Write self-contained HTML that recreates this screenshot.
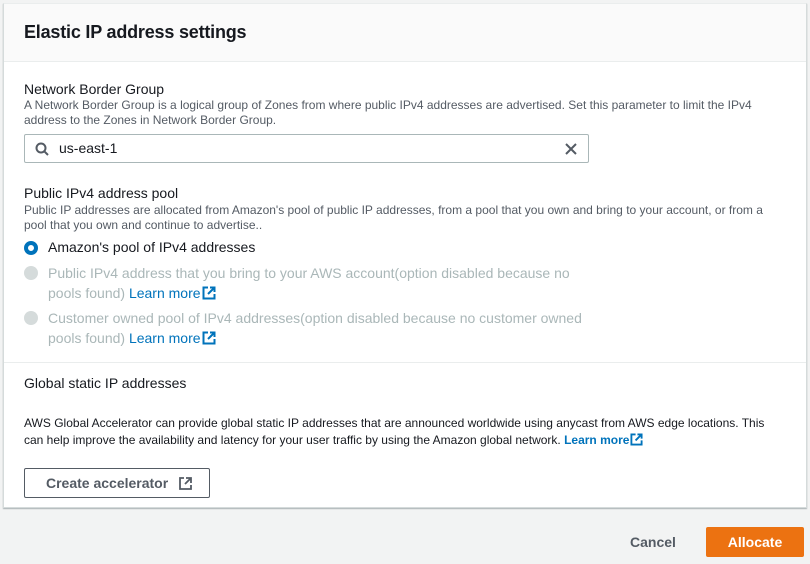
<!DOCTYPE html>
<html><head><style>
*{margin:0;padding:0;box-sizing:border-box}
body{width:810px;height:564px;background:#f2f3f3;font-family:"Liberation Sans",sans-serif;color:#16191f;position:relative;overflow:hidden}
.card{position:absolute;left:3px;top:3px;width:804px;height:505px;background:#fff;border:1px solid #d5dbdb;border-top:1px solid #eaeded;box-shadow:0 1px 1px rgba(0,28,36,.3)}
.hdr{height:58px;background:#fafafa;border-bottom:1px solid #eaeded;padding:18px 20px}
.hdr h2{font-size:18px;font-weight:bold;letter-spacing:-.2px}
.abs{position:absolute}
.lbl{font-size:14px;color:#16191f}
.desc{font-size:12px;color:#545b64;line-height:15px}
.inp{left:20px;top:130px;width:565px;height:29px;border:1px solid #aab7b8;border-radius:2px}
.radio{width:14px;height:14px;border-radius:50%}
.ro{font-size:14px;line-height:20px}
.dis{color:#aab7b8}
a{color:#0073bb;text-decoration:none}
.btn{left:20px;top:464px;width:186px;height:30px;border:1px solid #545b64;border-radius:2px;font-size:14px;font-weight:bold;color:#545b64;padding:6px 0 0 21px}
.ext{display:inline-block;vertical-align:-2px;margin-left:1px}
</style></head><body>
<div class="card">
<div class="hdr"><h2>Elastic IP address settings</h2></div>
<div class="abs lbl" style="left:20px;top:77px">Network Border Group</div>
<div class="abs desc" style="left:20px;top:94px;width:760px">A Network Border Group is a logical group of Zones from where public IPv4 addresses are advertised. Set this parameter to limit the IPv4 address to the Zones in Network Border Group.</div>
<div class="abs inp">
<svg class="abs" style="left:10px;top:7px" width="14" height="14" viewBox="0 0 14 14"><circle cx="6" cy="6" r="4.5" fill="none" stroke="#545b64" stroke-width="2"/><path d="M9.3 9.3L13 13" stroke="#545b64" stroke-width="2"/></svg>
<span class="abs" style="left:34px;top:5px;font-size:14px">us-east-1</span>
<svg class="abs" style="left:540px;top:8px" width="12" height="12" viewBox="0 0 12 12"><path d="M1 1L11 11M11 1L1 11" stroke="#545b64" stroke-width="2"/></svg>
</div>
<div class="abs lbl" style="left:20px;top:181px">Public IPv4 address pool</div>
<div class="abs desc" style="left:20px;top:199px;width:760px">Public IP addresses are allocated from Amazon's pool of public IP addresses, from a pool that you own and bring to your account, or from a pool that you own and continue to advertise..</div>
<div class="abs radio" style="left:20px;top:237px;border:4px solid #0073bb"></div>
<div class="abs ro" style="left:44px;top:233px">Amazon's pool of IPv4 addresses</div>
<div class="abs radio" style="left:20px;top:262px;background:#d5dbdb"></div>
<div class="abs ro dis" style="left:44px;top:259px;width:540px">Public IPv4 address that you bring to your AWS account(option disabled because no pools found) <a>Learn more<svg class="ext" width="14" height="14" viewBox="0 0 14 14"><path d="M6 1.5H1.5V12.5H12.5V8M8 1.5H12.5V6M12.5 1.5L6 8" fill="none" stroke="#0073bb" stroke-width="2"/></svg></a></div>
<div class="abs radio" style="left:20px;top:307px;background:#d5dbdb"></div>
<div class="abs ro dis" style="left:44px;top:304px;width:560px">Customer owned pool of IPv4 addresses(option disabled because no customer owned pools found) <a>Learn more<svg class="ext" width="14" height="14" viewBox="0 0 14 14"><path d="M6 1.5H1.5V12.5H12.5V8M8 1.5H12.5V6M12.5 1.5L6 8" fill="none" stroke="#0073bb" stroke-width="2"/></svg></a></div>
<div class="abs" style="left:0;top:358px;width:802px;border-top:1px solid #eaeded"></div>
<div class="abs lbl" style="left:20px;top:371px">Global static IP addresses</div>
<div class="abs" style="left:20px;top:411px;width:760px;font-size:12px;line-height:17px;color:#16191f">AWS Global Accelerator can provide global static IP addresses that are announced worldwide using anycast from AWS edge locations. This can help improve the availability and latency for your user traffic by using the Amazon global network. <a style="font-weight:bold">Learn more<svg class="ext" width="13" height="13" viewBox="0 0 14 14"><path d="M6 1.5H1.5V12.5H12.5V8M8 1.5H12.5V6M12.5 1.5L6 8" fill="none" stroke="#0073bb" stroke-width="2"/></svg></a></div>
<div class="abs btn">Create accelerator
<svg class="abs" style="left:154px;top:8px" width="13" height="13" viewBox="0 0 13 13"><path d="M5 1H1V12H12V8M7 1H12V6M12 1L6 7" fill="none" stroke="#545b64" stroke-width="1.8"/></svg></div>
</div>
<div class="abs" style="left:630px;top:534px;font-size:14px;font-weight:bold;color:#545b64">Cancel</div>
<div class="abs" style="left:706px;top:527px;width:98px;height:30px;background:#ec7211;border-radius:2px;color:#fff;font-size:14px;font-weight:bold;text-align:center;line-height:30px">Allocate</div>
</body></html>
